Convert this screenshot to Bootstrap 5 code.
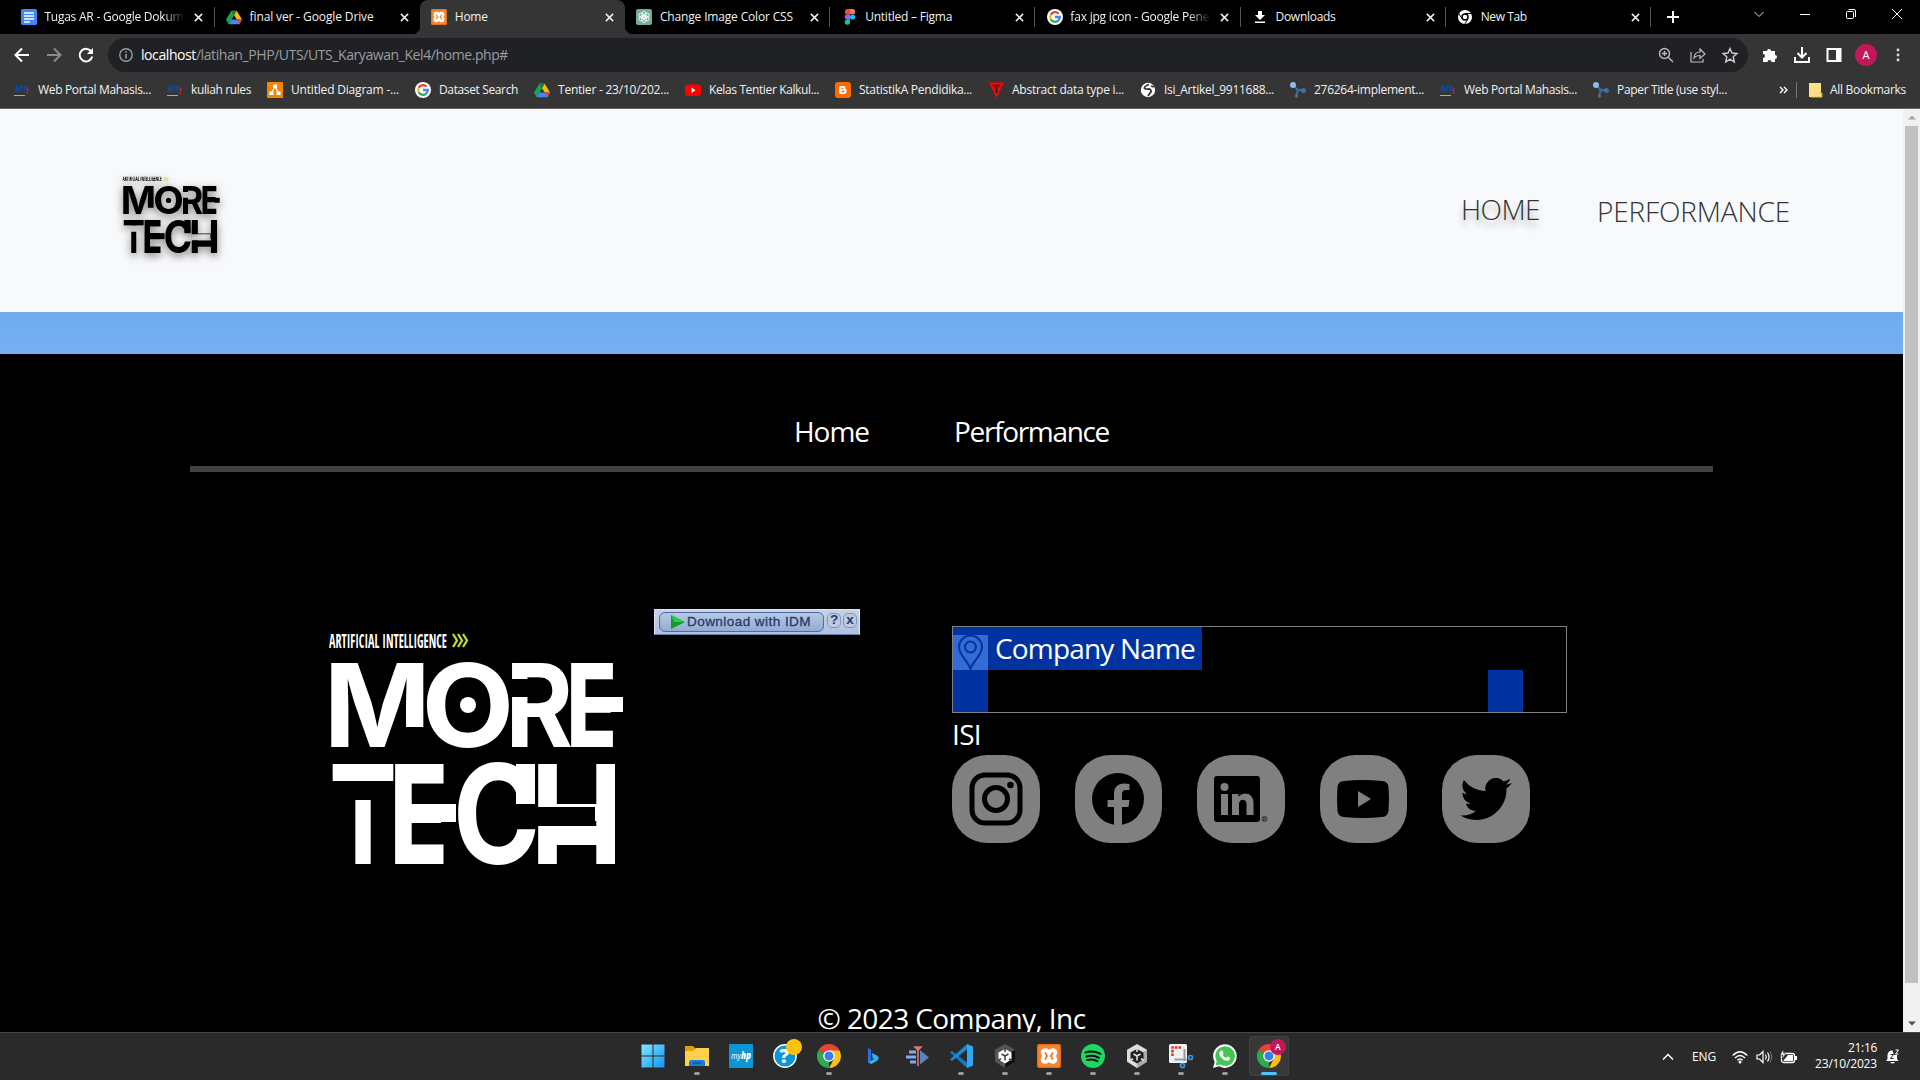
<!DOCTYPE html>
<html lang="id">
<head>
<meta charset="utf-8">
<title>Home</title>
<link href="https://cdn.jsdelivr.net/npm/bootstrap@5.3.0/dist/css/bootstrap.min.css" rel="stylesheet">
<style>
body{width:1920px;height:1080px;overflow:hidden;background:#000;font-family:"Open Sans","Noto Sans",sans-serif;font-size:12px;line-height:1.3}
svg{display:block;flex:none;overflow:visible}
[data-w]{white-space:nowrap;flex:none;display:block}
.tabstrip{height:34px;background:#000;color:#f1f1f1;padding-left:9.4px;font-size:12px}
.tab-item{width:205.2px;height:34px;padding-left:11.5px;flex:none;position:relative}
.tab-item .ttl{width:141px;margin-left:7.5px;overflow:hidden;white-space:nowrap}
.tab-item .faded{-webkit-mask-image:linear-gradient(90deg,#000 118px,transparent 141px)}
.tab-item .cls{margin-left:9px}
.tab-item.sep::after{content:"";position:absolute;right:0;top:7px;width:1px;height:20px;background:#555}
.tab-item.current{background:#353535;border-radius:8px 8px 0 0}
.tab-item.current::before,.tab-item.current::after{content:"";position:absolute;bottom:0;width:8px;height:8px}
.tab-item.current::before{left:-8px;background:radial-gradient(circle at 0 0,#000 8px,#353535 8.5px)}
.tab-item.current::after{right:-8px;background:radial-gradient(circle at 100% 0,#000 8px,#353535 8.5px)}
.plus{margin-left:14px}
.winbtns{margin-left:72px;gap:34px;height:28px}
.toolbar{height:42px;background:#353535;padding:0 15px 0 14px}
.omni{width:1640px;height:34px;border-radius:17px;background:#202124;margin-right:14px;padding:0 10px 0 11px;color:#9a9da1;font-size:14px}
.omni b{font-weight:400;color:#fff}
.avatar{width:22px;height:22px;border-radius:50%;background:#c2185b;color:#fff;font-size:11px;margin:0 14px 0 13px}
.bmbar{height:33px;background:#353535;border-bottom:1px solid #66625f;color:#f1f1f1;padding:0 14px;font-size:12px}
.bm{margin-right:16px;gap:8px}
.vline{width:1px;height:16px;background:#777}
.viewport{height:923px}
.site{width:1903px;height:923px;overflow:hidden;font-size:28px}
.site-head{height:203px;background:#f8f9fb;padding:63px 113px 0 117px}
.site-head svg{filter:drop-shadow(0 3px 4px rgba(0,0,0,.5))}
.site-nav{font-weight:300;color:#333;gap:57px;line-height:38px;padding-top:20px}
.site-nav .hov{text-shadow:0 6px 6px rgba(0,0,0,.3);position:relative;top:-2px}
.band{height:42px;background:linear-gradient(#70abf0,#76b0f2)}
.foot{height:678px;background:#000;color:#fff;padding-top:58px}
.foot-nav{gap:85px;line-height:38px}
.rule{width:1523px;height:6px;background:#424242;margin:16px auto 0}
.foot-main{height:525px;padding:154px 0 0 329px;position:relative}
.big-brand{margin-top:7px}
.info{margin-left:322px;width:616px}
.address{width:615px;height:87px;border:1px solid #808080}
.hl{background:#0033a0;height:43px;width:249px}
.pin{background:#346bd5;width:35px;height:35px;margin-top:8px}
.cname{margin-left:7px;line-height:43px}
.cell2{background:#0033a0;width:35px;height:42px}
.cell2 + .cell2{margin-right:43px}
.soc{width:87.500px;height:88px;background:#808080;border-radius:35px}
.socials{gap:35px;margin-top:2px}
.isi{line-height:38px;padding-top:2px}
.copy{line-height:38px;margin-top:2px}
.idm{position:absolute;left:654px;top:137px;width:206px;height:26px;background:linear-gradient(#c5d3ea,#b1bfdf);border:1px solid #dbe5f5;border-bottom-color:#6882a8;font-family:"Liberation Sans",sans-serif;font-size:13.5px;color:#243a70}
.idm .mainb{width:165px;height:20px;border:1px solid #5068a4;border-radius:6px;margin:0 3px 0 4px;background:linear-gradient(#b8c9e0,#91acd5);padding-left:10px;gap:2px;-webkit-text-stroke:.3px #243a70}
.idm .mini{width:14px;height:15px;border:1px solid #8194ba;border-radius:5px;margin:-3px 2px 0 0;background:#bccae2;font-weight:700;line-height:12px}
.scroller{width:17px;background:#f1f1f1;padding:0 2px}
.thumb{width:13px;height:857px;background:#c1c1c1}
.scroller .end{height:17px}
.taskbar{height:48px;background:#2a2a2a;border-top:1px solid #454545;color:#fff}
.apps{padding-left:633px;padding-top:3px}
.app{width:40px;height:40px;margin-right:4px;padding-top:8px;border-radius:4px;flex:none}
.app.run::after{content:"";width:6px;height:3px;border-radius:2px;background:#999;margin-top:4px}
.app.on{background:#383838;box-shadow:inset 0 0 0 1px #424242}
.app.on::after{content:"";width:16px;height:3px;border-radius:2px;background:#4cc2ff;margin-top:4px}
.tray{padding-right:20px;font-size:12px}
.lang{margin-left:18px}
.wifi{margin-left:14px}
.clock{line-height:16px;margin:0 8px 2px 18px}
.unity-a{--a:#555;--b:#111;--c:#fff;--d:#444}
.unity-b{--a:#ddd;--b:#aaa;--c:#222;--d:#ddd}
</style>
<script src="https://cdn.jsdelivr.net/npm/bootstrap@5.3.0/dist/js/bootstrap.bundle.min.js"></script>
</head>
<body>
<svg width="0" height="0" class="position-absolute">
<defs>
<symbol id="x" viewBox="0 0 10 10"><path d="M1 1l8 8M9 1l-8 8" stroke="#eee" stroke-width="1.700"/></symbol>
<symbol id="drive" viewBox="0 0 24 22"><path d="M8 1h8l8 13h-8z" fill="#fbbc04"/><path d="M8 1l4 7-8 13-4-7z" fill="#16a35a"/><path d="M8 14h16l-4 7H4z" fill="#4285f4"/><path d="M8 1h8l-4 7z" fill="#0b8043"/><path d="M16 14h8l-4 7z" fill="#ea4335"/></symbol>
<symbol id="goog" viewBox="0 0 24 24"><circle cx="12" cy="12" r="12" fill="#fff"/><g fill="none" stroke-width="3.400"><path d="M17.300 7A7.200 7.200 0 0 0 5.600 8.700" stroke="#ea4335"/><path d="M5.600 8.700a7.200 7.200 0 0 0 0 6.600" stroke="#fbbc05"/><path d="M5.600 15.300A7.200 7.200 0 0 0 16.800 17.400" stroke="#34a853"/><path d="M16.800 17.400A7.200 7.200 0 0 0 19.200 12H12" stroke="#4285f4"/></g></symbol>
<symbol id="xampp" viewBox="0 0 24 24"><rect width="24" height="24" rx="2" fill="#e8701a"/><rect x="1.500" y="1.500" width="21" height="21" rx="1.500" fill="#f58634"/><path d="M12 9.500Q11.500 5.500 8 5.500 4.800 5.800 5 9q.2 1.800 2 3-1.800 1.200-2 3-.2 3.200 3 3.500 3.500 0 4-4 .5 4 4 4 3.200-.3 3-3.500-.2-1.800-2-3 1.800-1.200 2-3 .2-3.200-3-3.500-3.500 0-4 4z" fill="#fff" stroke="#fff" stroke-width="2.400" stroke-linejoin="round"/><path d="M8.200 8.300q.8 3 2 3.700-1.200.7-2 3.700M15.800 8.300q-.8 3-2 3.700 1.200.7 2 3.700" fill="none" stroke="#f07a26" stroke-width="1.700"/></symbol>
<symbol id="chrome" viewBox="0 0 24 24"><path d="M12 12L1.600 6A12 12 0 0 1 22.400 6z" fill="#ea4335"/><path d="M12 12V24A12 12 0 0 1 1.600 6z" fill="#2da94f"/><path d="M12 6.500h10.600A12 12 0 0 1 12 24l4.800-9z" fill="#fbc116"/><circle cx="12" cy="12" r="5.800" fill="#fff"/><circle cx="12" cy="12" r="4.500" fill="#3b7ded"/></symbol>
<symbol id="btn-portal" viewBox="0 0 16 16"><g fill="none" stroke="#0b4aa0" stroke-width="1.500"><path d="M3 2L1.500 9q3 1 3.500-2-1-2-2.500 0M7.500 3L6.500 9M5.500 5h4M9.500 9L11 5q2-1 1.500 1L12 9"/></g><path d="M14 6l-.8 6" stroke="#d8141c" stroke-width="1.500"/><path d="M0 13.500h11" stroke="#aaa"/></symbol>
<symbol id="mol" viewBox="0 0 16 16"><path d="M3 3l5 5-2 6M8 8h5" stroke="#4f7fae" stroke-width="1.300" fill="none"/><circle cx="3" cy="3" r="3" fill="#90bce5"/><circle cx="8" cy="8.500" r="2" fill="#34679b"/><circle cx="13.500" cy="8.500" r="2.500" fill="#3f6f9f"/><circle cx="6.500" cy="14" r="1.800" fill="#3973a8"/></symbol>
<symbol id="cube" viewBox="0 0 24 24"><path d="M12 0l10 5.800v12L12 24 2 17.800v-12z" fill="var(--a)"/><path d="M12 12l10-6.200v12L12 24z" fill="var(--b)"/><path d="M12 5l6.500 3.500v7L12 19.500l-6.500-4v-7z" fill="var(--c)"/><path d="M12 12.500v4M12 12L8.500 10M12 12l3.500-2M12 4v4M5 16.500l3-1.800M19 16.500l-3-1.800" stroke="var(--d)" stroke-width="1.600"/></symbol>
<symbol id="brand" viewBox="0 0 296 234">
<mask id="cuts"><rect x="-5" y="-5" width="310" height="250" fill="#fff"/><path d="M0 148h65.500v19H0zM208 174h58v19h-58zM75 94h20v21H75zM181 46h19v18h-19z" fill="#000"/></mask>
<text x="0" y="14.500" font-family="Open Sans Condensed,Roboto,sans-serif" font-weight="500" font-size="19" textLength="118" lengthAdjust="spacingAndGlyphs" fill="currentColor">ARTIFICIAL INTELLIGENCE</text>
<path d="M124 1l4 6.500-4 6.500M129 1l4 6.500-4 6.500M134 1l4 6.500-4 6.500" stroke="#c5d92c" stroke-width="2.300" fill="none"/>
<g fill="currentColor" font-family="Inter,Roboto,sans-serif" font-weight="700" mask="url(#cuts)">
<g font-size="115"><text x="-5.300" y="113.500" textLength="107" lengthAdjust="spacingAndGlyphs">M</text><text x="92.600" y="113.500" textLength="92.800" lengthAdjust="spacingAndGlyphs">O</text><text x="176.200" y="113.500" textLength="67.800" lengthAdjust="spacingAndGlyphs">R</text><text x="237.600" y="113.500" textLength="50.400" lengthAdjust="spacingAndGlyphs" font-weight="800">E</text></g>
<g font-size="138"><text x="0" y="230.500" textLength="68" lengthAdjust="spacingAndGlyphs">T</text><text x="60.800" y="230.500" textLength="58.400" lengthAdjust="spacingAndGlyphs" font-weight="800">E</text><text x="123.800" y="230.500" textLength="87.500" lengthAdjust="spacingAndGlyphs">C</text><text x="201" y="230.500" textLength="93.200" lengthAdjust="spacingAndGlyphs">H</text></g></g>
<g fill="currentColor"><circle cx="139" cy="72" r="8"/><rect x="278" y="64" width="16" height="15"/><rect x="108" y="171" width="19" height="18"/><rect x="210" y="193" width="70" height="19"/><rect x="187" y="131" width="19" height="40"/></g>
</symbol>
</defs></svg>

<div class="tabstrip d-flex align-items-center">
<div class="tab-item sep d-flex align-items-center"><svg width="16" height="16" viewBox="0 0 16 16"><rect width="16" height="16" rx="1.500" fill="#4285f4"/><path d="M3 4h10M3 7h10M3 10h10M3 13h6" stroke="#fff" stroke-width="1.600"/></svg><div class="ttl faded"><span data-w="139">Tugas AR - Google Dokum</span></div><svg class="cls" width="9" height="9"><use href="#x"/></svg></div>
<div class="tab-item d-flex align-items-center"><svg width="16" height="15"><use href="#drive"/></svg><div class="ttl"><span data-w="124">final ver - Google Drive</span></div><svg class="cls" width="9" height="9"><use href="#x"/></svg></div>
<div class="tab-item current d-flex align-items-center"><svg width="16" height="16"><use href="#xampp"/></svg><div class="ttl"><span data-w="33">Home</span></div><svg class="cls" width="9" height="9"><use href="#x"/></svg></div>
<div class="tab-item sep d-flex align-items-center"><svg width="16" height="16" viewBox="0 0 16 16"><rect width="16" height="16" rx="2" fill="#74aa9c"/><g fill="none" stroke="#fff" stroke-width=".8"><ellipse cx="8" cy="5.800" rx="2.300" ry="3.600"/><ellipse cx="8" cy="5.800" rx="2.300" ry="3.600" transform="rotate(60 8 8)"/><ellipse cx="8" cy="5.800" rx="2.300" ry="3.600" transform="rotate(120 8 8)"/><ellipse cx="8" cy="5.800" rx="2.300" ry="3.600" transform="rotate(180 8 8)"/><ellipse cx="8" cy="5.800" rx="2.300" ry="3.600" transform="rotate(240 8 8)"/><ellipse cx="8" cy="5.800" rx="2.300" ry="3.600" transform="rotate(300 8 8)"/></g></svg><div class="ttl"><span data-w="133">Change Image Color CSS</span></div><svg class="cls" width="9" height="9"><use href="#x"/></svg></div>
<div class="tab-item sep d-flex align-items-center"><svg width="16" height="16" viewBox="0 0 16 16"><path d="M8 0H5.500a2.600 2.600 0 0 0 0 5.300H8z" fill="#f24e1e"/><path d="M8 0h2.500a2.600 2.600 0 0 1 0 5.300H8z" fill="#ff7262"/><path d="M8 5.300H5.500a2.600 2.600 0 0 0 0 5.300H8z" fill="#a259ff"/><circle cx="10.600" cy="8" r="2.600" fill="#1abcfe"/><path d="M8 10.600H5.500a2.600 2.600 0 1 0 2.500 2.800z" fill="#0acf83"/></svg><div class="ttl"><span data-w="87">Untitled – Figma</span></div><svg class="cls" width="9" height="9"><use href="#x"/></svg></div>
<div class="tab-item sep d-flex align-items-center"><svg width="16" height="16"><use href="#goog"/></svg><div class="ttl faded"><span data-w="139">fax jpg icon - Google Pene</span></div><svg class="cls" width="9" height="9"><use href="#x"/></svg></div>
<div class="tab-item sep d-flex align-items-center"><svg width="16" height="16" viewBox="0 0 16 16"><path d="M6 2h4v4h3l-5 5-5-5h3zM3 12.500h10V14H3z" fill="#fff"/></svg><div class="ttl"><span data-w="60">Downloads</span></div><svg class="cls" width="9" height="9"><use href="#x"/></svg></div>
<div class="tab-item sep d-flex align-items-center"><svg width="16" height="16" viewBox="0 0 16 16"><circle cx="8" cy="8" r="7" fill="#fff"/><circle cx="8" cy="8" r="3" fill="#fff" stroke="#000" stroke-width="1.500"/><path d="M8 4.500h7M5 9.800L1.500 4M11 9.800L7.500 15.500" stroke="#000"/></svg><div class="ttl"><span data-w="46">New Tab</span></div><svg class="cls" width="9" height="9"><use href="#x"/></svg></div>
<svg class="plus" width="16" height="16" viewBox="0 0 16 16"><path d="M8 2v12M2 8h12" stroke="#fff" stroke-width="2"/></svg>
<div class="winbtns d-flex align-items-center align-self-start">
<svg width="12" height="12" viewBox="0 0 12 12"><path d="M1.500 4L6 8.500 10.500 4" stroke="#ddd" fill="none"/></svg>
<svg width="12" height="12" viewBox="0 0 12 12"><path d="M1 6.500h10" stroke="#fff"/></svg>
<svg width="12" height="12" viewBox="0 0 12 12"><rect x="1.500" y="3.500" width="7" height="7" rx="1" fill="none" stroke="#fff"/><path d="M3.500 1.500H9a1.500 1.500 0 0 1 1.500 1.500v6" stroke="#fff" fill="none"/></svg>
<svg width="12" height="12" viewBox="0 0 12 12"><path d="M1 1l10 10M11 1L1 11" stroke="#fff"/></svg></div>
</div>

<div class="toolbar d-flex align-items-center">
<svg width="16" height="16" viewBox="0 0 16 16"><path d="M15 8H2M8 1.500L1.500 8 8 14.500" fill="none" stroke="#fff" stroke-width="2"/></svg>
<svg class="ms-3" width="16" height="16" viewBox="0 0 16 16"><path d="M1 8h13M8 1.500L14.500 8 8 14.500" fill="none" stroke="#8a8a8a" stroke-width="2"/></svg>
<svg class="ms-3" width="16" height="16" viewBox="0 0 16 16"><path d="M13.500 5A6.300 6.300 0 1 0 14.200 9.500" fill="none" stroke="#fff" stroke-width="2"/><path d="M15 1v6H9z" fill="#fff"/></svg>
<div class="omni d-flex align-items-center ms-auto">
<svg width="14" height="14" viewBox="0 0 14 14"><circle cx="7" cy="7" r="6.200" fill="none" stroke="#9a9da1" stroke-width="1.400"/><path d="M7 6v4.500M7 3.200v1.600" stroke="#9a9da1" stroke-width="1.600"/></svg>
<span class="ms-2" data-w="367"><b>localhost</b>/latihan_PHP/UTS/UTS_Karyawan_Kel4/home.php#</span>
<svg class="ms-auto me-3" width="16" height="16" viewBox="0 0 16 16"><g fill="none" stroke="#bbb" stroke-width="1.400"><circle cx="6.500" cy="6.500" r="5"/><path d="M10.200 10.200L15 15M6.500 4v5M4 6.500h5"/></g></svg>
<svg class="me-3" width="16" height="16" viewBox="0 0 16 16"><path d="M1 5v10h12v-3M4 11q.5-6 6-6V2l5 5-5 4.500V8.500Q6 8.500 4 11z" fill="none" stroke="#bbb" stroke-width="1.200"/></svg>
<svg width="16" height="16" viewBox="0 0 16 16"><path d="M8 1.500l2 4.500 5 .5-3.800 3.200L12.300 15 8 12.200 3.700 15l1.100-5.300L1 6.500 6 6z" fill="none" stroke="#ccc" stroke-width="1.400"/></svg>
</div>
<svg width="16" height="16" viewBox="0 0 16 16"><path d="M1 4h4a2 2 0 1 1 4 0h4v4a2 2 0 1 1 0 4v3H9.500a2 2 0 0 0-4 0H1v-4a2 2 0 0 0 0-4z" fill="#fff"/></svg>
<svg class="ms-3" width="16" height="16" viewBox="0 0 16 16"><path d="M8 0v10M3.500 6L8 10.500 12.500 6M1 10v5h14v-5" fill="none" stroke="#fff" stroke-width="2"/></svg>
<svg class="ms-3" width="16" height="14" viewBox="0 0 16 14"><path d="M1.500 1h13v12h-13z" fill="none" stroke="#fff" stroke-width="2"/><path d="M10 1h5v12h-5z" fill="#fff"/></svg>
<div class="avatar d-flex align-items-center justify-content-center">A</div>
<svg width="14" height="16" viewBox="0 0 14 16"><path d="M7 3h.01M7 8h.01M7 13h.01" stroke="#ddd" stroke-width="2.800" stroke-linecap="round"/></svg>
</div>

<div class="bmbar d-flex align-items-center pb-1">
<div class="bm d-flex align-items-center"><svg width="16" height="16"><use href="#btn-portal"/></svg><span data-w="113">Web Portal Mahasis...</span></div>
<div class="bm d-flex align-items-center"><svg width="16" height="16"><use href="#btn-portal"/></svg><span data-w="60">kuliah rules</span></div>
<div class="bm d-flex align-items-center"><svg width="16" height="16" viewBox="0 0 16 16"><rect width="16" height="16" rx="1" fill="#f08705"/><path d="M8 4.500L4.500 11M8 4.500l3.500 6.500" stroke="#fff" stroke-width="1.300"/><path d="M6 2.500h4v3.500H6zM2.500 9.500h4v3.500h-4zM9.500 9.500h4v3.500h-4z" fill="#fff"/></svg><span data-w="108">Untitled Diagram -...</span></div>
<div class="bm d-flex align-items-center"><svg width="16" height="16"><use href="#goog"/></svg><span data-w="79">Dataset Search</span></div>
<div class="bm d-flex align-items-center"><svg width="16" height="15"><use href="#drive"/></svg><span data-w="111">Tentier - 23/10/202...</span></div>
<div class="bm d-flex align-items-center"><svg width="16" height="16" viewBox="0 0 16 16"><rect y="2.500" width="16" height="11.500" rx="3" fill="#f00"/><path d="M6.500 5.500l4 2.700-4 2.700z" fill="#fff"/></svg><span data-w="110">Kelas Tentier Kalkul...</span></div>
<div class="bm d-flex align-items-center"><svg width="16" height="16" viewBox="0 0 16 16"><rect width="16" height="16" rx="3" fill="#ff6a00"/><path d="M6 4h2.500a2 2 0 0 1 2 2.200q0 1 1 1V9.800A2.200 2.200 0 0 1 9.500 12H6a2 2 0 0 1-2-2V6a2 2 0 0 1 2-2z" fill="#fff"/><path d="M6.500 6.500h2M6.500 9.500h3" stroke="#ff6a00" stroke-width="1.300"/></svg><span data-w="113">StatistikA Pendidika...</span></div>
<div class="bm d-flex align-items-center"><svg width="16" height="16" viewBox="0 0 16 16"><path d="M1 .5h15L8.500 16z" fill="#f00"/><path d="M4.500 3.500h8M8.500 3.500V11" stroke="#351a1a" stroke-width="1.700"/></svg><span data-w="112">Abstract data type i...</span></div>
<div class="bm d-flex align-items-center"><svg width="16" height="16" viewBox="0 0 16 16"><circle cx="8" cy="8" r="7.200" fill="#fff"/><path d="M9 2.500Q4 4 4.500 6.500q2 1 5 .5 3 2 .5 4l-2 3M11 4l3 1" stroke="#353535" stroke-width="1.800" fill="none"/></svg><span data-w="110">Isi_Artikel_9911688...</span></div>
<div class="bm d-flex align-items-center"><svg width="16" height="16"><use href="#mol"/></svg><span data-w="110">276264-implement...</span></div>
<div class="bm d-flex align-items-center"><svg width="16" height="16"><use href="#btn-portal"/></svg><span data-w="113">Web Portal Mahasis...</span></div>
<div class="bm d-flex align-items-center"><svg width="16" height="16"><use href="#mol"/></svg><span data-w="110">Paper Title (use styl...</span></div>
<svg class="ms-auto" width="9" height="8" viewBox="0 0 9 8"><path d="M1 1l3 3-3 3M5 1l3 3-3 3" fill="none" stroke="#fff" stroke-width="1.400"/></svg>
<span class="vline ms-2 me-2"></span>
<svg class="mx-1" width="13" height="14" viewBox="0 0 13 14"><path d="M0 0h12v9l1 5H0z" fill="#ffe08a"/><path d="M10 10h3v4H2" fill="none" stroke="#e8bb3c"/></svg>
<span class="ms-1" data-w="76">All Bookmarks</span>
</div>

<div class="viewport d-flex">
<div class="site">
<header class="site-head d-flex justify-content-between align-items-start">
<svg width="110" height="86" viewBox="-17 -14 333 260" color="#000"><use href="#brand" width="296" height="234"/></svg>
<nav class="site-nav d-flex"><span class="hov" data-w="79">HOME</span><span data-w="193">PERFORMANCE</span></nav>
</header>
<div class="band"></div>
<footer class="foot">
<nav class="foot-nav d-flex justify-content-center"><span data-w="75">Home</span><span data-w="155">Performance</span></nav>
<div class="rule"></div>
<div class="foot-main d-flex align-items-start">
<svg class="big-brand" width="301" height="234" viewBox="0 0 301 234" color="#fff"><use href="#brand" width="296" height="234"/></svg>
<div class="idm d-flex align-items-center"><div class="mainb d-flex align-items-center"><svg width="15" height="14" viewBox="0 0 15 14"><path d="M1 0l14 7L1 14z" fill="#129a2c"/><path d="M1 0l14 7H4z" fill="#31c94b"/></svg><span data-w="124">Download with IDM</span></div><span class="mini d-flex justify-content-center">?</span><span class="mini d-flex justify-content-center">x</span></div>
<div class="info">
<div class="address"><div class="hl d-flex"><div class="pin"><svg width="35" height="35" viewBox="0 0 35 35"><g fill="none" stroke="#0033a0" stroke-width="2"><path d="M17.500 34C15 26 6 20 6 12a11.500 11.500 0 0 1 23 0c0 8-9 14-11.500 22z"/><circle cx="17.500" cy="12" r="5.500"/></g></svg></div><span class="cname" data-w="200">Company Name</span></div>
<div class="d-flex justify-content-between"><div class="cell2"></div><div class="cell2"></div></div></div>
<div class="isi"><span data-w="29">ISI</span></div>
<div class="socials d-flex">
<div class="soc d-flex align-items-center justify-content-center"><svg width="54" height="54" viewBox="0 0 54 54"><g fill="none" stroke="#000"><rect x="3" y="3" width="48" height="48" rx="13" stroke-width="5"/><circle cx="27" cy="27" r="11.500" stroke-width="5"/></g><circle cx="41.500" cy="13" r="3.300"/></svg></div>
<div class="soc d-flex align-items-center justify-content-center"><svg width="52" height="52" viewBox="0 0 52 52"><circle cx="26" cy="26" r="26"/><path d="M22 52V34h-6.500v-7H22v-6c0-7 4-10.500 10-10.500l5.500.5v6H34c-3 0-4 1.800-4 4v6h7.500l-1 7H30v18z" fill="#808080"/></svg></div>
<div class="soc d-flex align-items-center justify-content-center"><svg width="54" height="46" viewBox="0 0 54 46"><rect width="46" height="46" rx="3"/><circle cx="10.500" cy="11" r="4" fill="#808080"/><path d="M7 18h7v21H7zM18 18h6.500v3c4-6 15-4.500 15 6v12h-7V28c0-6-7.500-5.500-7.500 0v11h-7z" fill="#808080"/><circle cx="50.500" cy="43" r="2.700" fill="none" stroke="#222" stroke-width=".6"/><text x="48.800" y="44.700" font-size="5" font-family="Liberation Sans,sans-serif">R</text></svg></div>
<div class="soc d-flex align-items-center justify-content-center"><svg width="52" height="38" viewBox="0 0 52 38"><path d="M7 1Q26-1 45 1q6 .5 6.500 6 1 12 0 24-.5 5.500-6.500 6-19 2-38 0-6-.5-6.500-6-1-12 0-24Q1 1.500 7 1z"/><path d="M21 11l13 8-13 8z" fill="#808080"/></svg></div>
<div class="soc d-flex align-items-center justify-content-center"><svg width="52" height="42" viewBox="0 0 24 19.500"><path d="M24 2.300a10 10 0 0 1-2.800.8A5 5 0 0 0 23.300.4a10 10 0 0 1-3.100 1.200 4.900 4.900 0 0 0-8.400 4.500A14 14 0 0 1 1.700.9a4.900 4.900 0 0 0 1.500 6.600A5 5 0 0 1 1 6.900a4.900 4.900 0 0 0 3.900 4.900 5 5 0 0 1-2.200.1 4.900 4.900 0 0 0 4.600 3.400A9.900 9.900 0 0 1 0 17.300a14 14 0 0 0 21.500-12.400A10 10 0 0 0 24 2.300z"/></svg></div>
</div></div>
</div>
<div class="copy d-flex justify-content-center"><span data-w="268">© 2023 Company, Inc</span></div>
</footer>
</div>
<div class="scroller d-flex flex-column"><div class="end d-flex align-items-center justify-content-center"><svg width="8" height="5" viewBox="0 0 8 5"><path d="M0 4.500l4-4 4 4z" fill="#a3a3a3"/></svg></div><div class="thumb"></div><div class="end mt-auto d-flex align-items-center justify-content-center"><svg width="8" height="5" viewBox="0 0 8 5"><path d="M0 .5l4 4 4-4z" fill="#505050"/></svg></div></div>
</div>

<div class="taskbar d-flex">
<div class="apps d-flex">
<div class="app d-flex flex-column align-items-center"><svg width="24" height="24" viewBox="0 0 24 24"><linearGradient id="wg" x2="1" y2="1"><stop stop-color="#81e8ff"/><stop offset="1" stop-color="#1193f5"/></linearGradient><path d="M.5.500h11v11H.5zM12.500.5h11v11h-11zM.5 12.500h11v11H.5zM12.500 12.500h11v11h-11z" fill="url(#wg)"/></svg></div>
<div class="app run d-flex flex-column align-items-center"><svg width="24" height="24" viewBox="0 0 24 24"><path d="M0 2h8l3 3-2 4H0z" fill="#e0a008"/><path d="M0 7h8l3-3h13v18H0z" fill="#ffcf4e"/><path d="M4 22v-4q0-2 2-2h12q2 0 2 2v4z" fill="#1580d8"/><path d="M8 19h8" stroke="#0a53a0" stroke-width="1.500"/></svg></div>
<div class="app d-flex flex-column align-items-center"><svg width="24" height="24" viewBox="0 0 24 24"><rect width="24" height="24" rx="1" fill="#0c96d8"/><text x="2" y="15" font-size="9" font-style="italic" fill="#fff" font-family="Open Sans,sans-serif" textLength="20" lengthAdjust="spacingAndGlyphs">my<tspan font-weight="800" font-size="10">hp</tspan></text></svg></div>
<div class="app d-flex flex-column align-items-center"><svg width="24" height="24" viewBox="0 0 24 24"><circle cx="12" cy="12" r="11.200" fill="#0c96d8" stroke="#fff" stroke-width="1.400"/><text x="6.500" y="18.500" font-size="19" font-weight="800" fill="#fff" font-family="Open Sans,sans-serif">?</text><circle cx="21" cy="3" r="8" fill="#ffc20e"/></svg></div>
<div class="app run d-flex flex-column align-items-center"><svg width="24" height="24"><use href="#chrome"/></svg></div>
<div class="app d-flex flex-column align-items-center"><svg width="24" height="24" viewBox="0 0 24 24"><path d="M7 4l3 1.500v11L7 19z" fill="#2f6de8"/><path d="M11 9l5 2.500q3 2 .5 5l-6 3.500L7 18.500l6-3.500-1.500-1z" fill="#29b7ee"/></svg></div>
<div class="app d-flex flex-column align-items-center"><svg width="24" height="24" viewBox="0 0 24 24"><path d="M4 8h7M1 13h10M5 18h6" stroke="#7dadf0" stroke-width="3"/><path d="M15 6l9 7.500-9 7z" fill="#5b84bd"/><path d="M13 4v18M10 3h6l-3 3z" stroke="#e0786c" stroke-width="1.600" fill="#e0786c"/></svg></div>
<div class="app run d-flex flex-column align-items-center"><svg width="24" height="24" viewBox="0 0 24 24"><path d="M1 8.500L3 7l15 11.500V24z" fill="#1079c2"/><path d="M1 15.500L3 17 18 5.500V0z" fill="#1a8ad6"/><path d="M18 0l6 2.500v19L18 24z" fill="#31a8f3"/></svg></div>
<div class="app run d-flex flex-column align-items-center"><svg class="unity-a" width="24" height="24"><use href="#cube"/></svg></div>
<div class="app run d-flex flex-column align-items-center"><svg width="24" height="24"><use href="#xampp"/></svg></div>
<div class="app run d-flex flex-column align-items-center"><svg width="24" height="24" viewBox="0 0 24 24"><circle cx="12" cy="12" r="12" fill="#1ed760"/><path d="M4.500 8.500Q12 6 19.500 9.800M5.500 12.500q6.500-2 12.500 1.300M6 16q6-1.500 10.500 1.200" fill="none" stroke="#111" stroke-width="2" stroke-linecap="round"/></svg></div>
<div class="app run d-flex flex-column align-items-center"><svg class="unity-b" width="24" height="24"><use href="#cube"/></svg></div>
<div class="app run d-flex flex-column align-items-center"><svg width="24" height="24" viewBox="0 0 24 24"><rect width="18" height="19" rx="1.500" fill="#eef2f6"/><path d="M3.500 12V3.500H13" fill="none" stroke="#d83b1c" stroke-width="2.600" stroke-dasharray="2.600 1"/><path d="M5.500 15.500h12M15.500 5v12" stroke="#999" stroke-width="2"/><circle cx="21.500" cy="13.500" r="2" fill="none" stroke="#2d9de5" stroke-width="1.700"/><circle cx="13.500" cy="21.500" r="2" fill="none" stroke="#2d9de5" stroke-width="1.700"/></svg></div>
<div class="app run d-flex flex-column align-items-center"><svg width="24" height="24" viewBox="0 0 24 24"><path d="M0 24l1.700-6A11.800 11.800 0 1 1 6 22.300z" fill="#fff"/><path d="M2.500 21.500l1.300-4.300A9.800 9.800 0 1 1 7 20.400z" fill="#45c554"/><path d="M8 6.500l1.600.2 1 2.600-1 1.400q1.300 2.300 3.600 3.200l1.300-1.400 2.600 1.200q.2 2.700-2.600 3-4 .2-7.200-4.200Q5 8.500 8 6.500z" fill="#fff"/></svg></div>
<div class="app on d-flex flex-column align-items-center"><svg width="24" height="24" viewBox="0 0 24 24"><use href="#chrome"/><circle cx="21" cy="3" r="8" fill="#c2185b"/><text x="18" y="6" font-size="8.500" font-weight="600" fill="#fff" font-family="Open Sans,sans-serif">A</text></svg></div>
</div>
<div class="tray d-flex align-items-center ms-auto">
<svg width="12" height="8" viewBox="0 0 12 8"><path d="M1 6.500L6 1.500l5 5" fill="none" stroke="#fff" stroke-width="1.500"/></svg>
<span class="lang" data-w="24">ENG</span>
<svg class="wifi ms-3" width="16" height="14" viewBox="0 0 16 14"><g fill="none" stroke="#fff" stroke-width="1.300"><path d="M.7 5.500Q8-2 15.300 5.500M3 8q5-5 10 0M5.300 10.300q2.700-2.600 5.400 0"/></g><circle cx="8" cy="12" r="1.500" fill="#fff"/></svg>
<svg class="ms-2" width="16" height="14" viewBox="0 0 16 14"><path d="M1 5h2.500L7 1.500v11L3.500 9H1zM9.500 4.500q1.500 2.500 0 5M11.500 2.500q3 4.500 0 9" fill="none" stroke="#fff" stroke-width="1.200"/><path d="M14 1.500q3.500 5.500 0 11" stroke="#777" fill="none"/></svg>
<svg class="ms-2" width="17" height="14" viewBox="0 0 17 14"><rect x="1.500" y="3.500" width="13" height="9" rx="2" fill="none" stroke="#fff" stroke-width="1.300"/><path d="M3.500 10.500L8 5h5v6H3.500zM15 6h2v4h-2z" fill="#fff"/><path d="M3 0L0 5h3L2 9l4-5H4z" fill="#fff" stroke="#2a2a2a" stroke-width=".6"/></svg>
<div class="clock d-flex flex-column align-items-end"><span data-w="29">21:16</span><span data-w="62">23/10/2023</span></div>
<svg width="15" height="16" viewBox="0 0 15 16"><path d="M1 12l1.500-2V6a4.500 4.500 0 0 1 5-4.500L9 6l3 0v4l1.500 2zM5 13h5q-2.500 3-5 0z" fill="#fff"/><path d="M5.500 5.500h3l-3 4h3" fill="none" stroke="#2a2a2a"/><path d="M10.500 1h3l-3 4h3" fill="none" stroke="#fff"/></svg>
</div>
</div>
<script>
// Tune letter spacing so every label fills its designed width
function fitLabels(){
  document.querySelectorAll('[data-w]').forEach(function(el){
    el.style.width='max-content';el.style.letterSpacing='0px';
    var w=+el.dataset.w, nat=el.getBoundingClientRect().width;
    el.style.letterSpacing=((w-nat)/el.textContent.length)+'px';
    el.style.width=w+'px';
  });
}
fitLabels();
document.fonts.ready.then(fitLabels);
</script>
</body>
</html>
